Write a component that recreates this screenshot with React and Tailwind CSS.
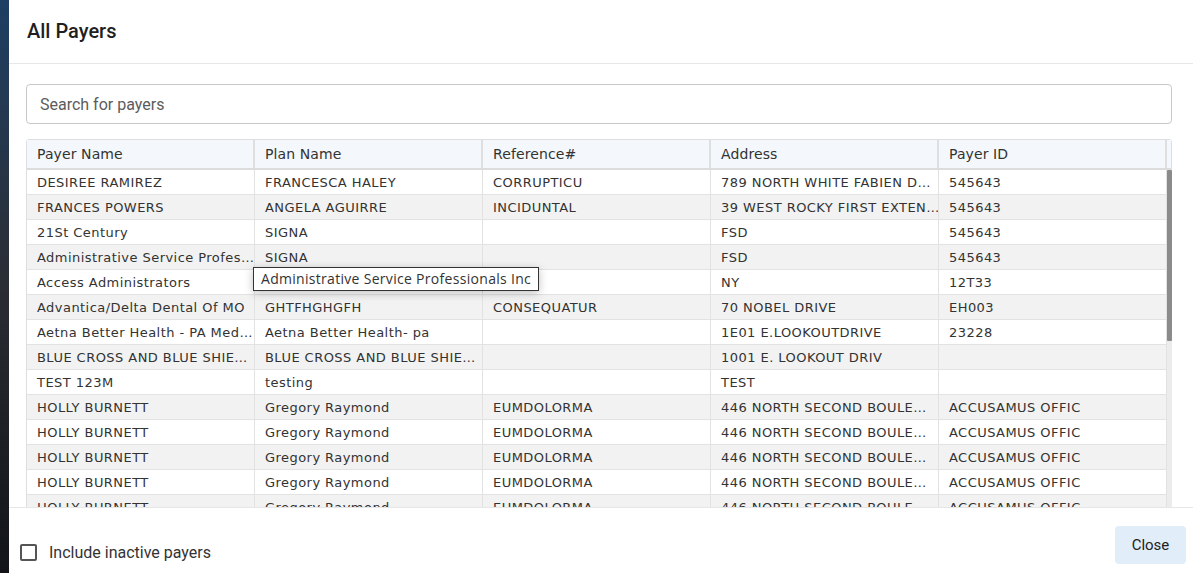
import { useState } from 'react';

const columns = ['Payer Name', 'Plan Name', 'Reference#', 'Address', 'Payer ID'];

const rows = [
  ['DESIREE RAMIREZ', 'FRANCESCA HALEY', 'CORRUPTICU', '789 NORTH WHITE FABIEN D…', '545643'],
  ['FRANCES POWERS', 'ANGELA AGUIRRE', 'INCIDUNTAL', '39 WEST ROCKY FIRST EXTEN…', '545643'],
  ['21St Century', 'SIGNA', '', 'FSD', '545643'],
  ['Administrative Service Profes…', 'SIGNA', '', 'FSD', '545643'],
  ['Access Administrators', '', '', 'NY', '12T33'],
  ['Advantica/Delta Dental Of MO', 'GHTFHGHGFH', 'CONSEQUATUR', '70 NOBEL DRIVE', 'EH003'],
  ['Aetna Better Health - PA Med…', 'Aetna Better Health- pa', '', '1E01 E.LOOKOUTDRIVE', '23228'],
  ['BLUE CROSS AND BLUE SHIE…', 'BLUE CROSS AND BLUE SHIE…', '', '1001 E. LOOKOUT DRIV', ''],
  ['TEST 123M', 'testing', '', 'TEST', ''],
  ['HOLLY BURNETT', 'Gregory Raymond', 'EUMDOLORMA', '446 NORTH SECOND BOULE…', 'ACCUSAMUS OFFIC'],
  ['HOLLY BURNETT', 'Gregory Raymond', 'EUMDOLORMA', '446 NORTH SECOND BOULE…', 'ACCUSAMUS OFFIC'],
  ['HOLLY BURNETT', 'Gregory Raymond', 'EUMDOLORMA', '446 NORTH SECOND BOULE…', 'ACCUSAMUS OFFIC'],
  ['HOLLY BURNETT', 'Gregory Raymond', 'EUMDOLORMA', '446 NORTH SECOND BOULE…', 'ACCUSAMUS OFFIC'],
  ['HOLLY BURNETT', 'Gregory Raymond', 'EUMDOLORMA', '446 NORTH SECOND BOULE…', 'ACCUSAMUS OFFIC'],
];

export default function App() {
  const [search, setSearch] = useState('');
  const [inactive, setInactive] = useState(false);

  return (
    <div className="flex h-[573px] w-[1193px] overflow-hidden bg-[#15181e]">
      {/* backdrop sliver */}
      <div className="w-[9px] bg-gradient-to-b from-[#1d3f63] via-[#2a2d33] to-[#121419]" />

      {/* modal */}
      <div className="flex flex-1 flex-col bg-white">
        <div className="flex h-[64px] items-center border-b border-[#e6e6e6] pb-[2px] pl-[18px]">
          <h2 className="text-[20px] font-medium text-[#1f1f1f] [font-family:Roboto,sans-serif]">All Payers</h2>
        </div>

        <div className="relative flex-1 overflow-hidden px-[17px] pt-[20px]">
          <input
            value={search}
            onChange={(e) => setSearch(e.target.value)}
            placeholder="Search for payers"
            className="h-[40px] w-[1146px] rounded-[4px] border border-[#c8c8c8] px-[13px] text-[16px] text-[#333] placeholder-[#5c5c5c] outline-none [font-family:Roboto,sans-serif]"
          />

          {/* table */}
          <div className="relative mt-[15px] w-[1146px] rounded-t-[3px] border border-[#dedede] text-[#333] [font-family:'DejaVu_Sans',sans-serif]">
            <div className="flex h-[30px] border-b-2 border-[#dcdcdc] bg-[#f4f8fc]">
              {columns.map((c) => (
                <div
                  key={c}
                  className="flex w-[228px] items-center border-r-2 border-[#dedede] px-[10px] text-[14px] tracking-[0.1px]"
                >
                  {c}
                </div>
              ))}
              <div className="flex-1" />
            </div>

            <div className="flex">
              <div className="w-[1140px]">
                {rows.map((r, i) => (
                  <div
                    key={i}
                    className={`flex h-[25px] border-b border-[#e2e2e2] ${i % 2 === 1 ? 'bg-[#f2f2f2]' : 'bg-white'}`}
                  >
                    {r.map((cell, j) => (
                      <div
                        key={j}
                        className="flex w-[228px] items-center overflow-hidden whitespace-nowrap border-r border-[#e2e2e2] pl-[10px] pr-[3px] pt-[2px] text-[13px] tracking-[0.45px]"
                      >
                        {cell}
                      </div>
                    ))}
                  </div>
                ))}
              </div>
              {/* scrollbar */}
              <div className="w-[6px] bg-[#ececec]">
                <div className="h-[171px] w-[5px] rounded-[1px] bg-[#8b8b8b]" />
              </div>
            </div>

            {/* tooltip */}
            <div className="absolute left-[226px] top-[127px] h-[24px] border border-[#333] bg-white px-[7px] pt-[1px] text-[14px] leading-[20px] tracking-[0.3px] text-[#333] shadow-[0_2px_8px_rgba(0,0,0,0.25)] [font-family:'Open_Sans',sans-serif]">
              Administrative Service Professionals Inc
            </div>
          </div>
        </div>

        <div className="flex h-[66px] items-end justify-between border-t border-[#e6e6e6] pb-[9px] pl-[11px] pr-[7px] [font-family:Roboto,sans-serif]">
          <label className="flex h-[24px] items-center gap-[12px] pt-[1px] text-[16px] text-[#333]">
            <span
              onClick={() => setInactive(!inactive)}
              className="h-[17px] w-[17px] rounded-[2px] border-2 border-[#555]"
            />
            Include inactive payers
          </label>
          <button className="h-[38px] w-[71px] rounded-[4px] bg-[#e1eefa] text-[15px] font-normal text-[#222]">
            Close
          </button>
        </div>
      </div>
    </div>
  );
}
